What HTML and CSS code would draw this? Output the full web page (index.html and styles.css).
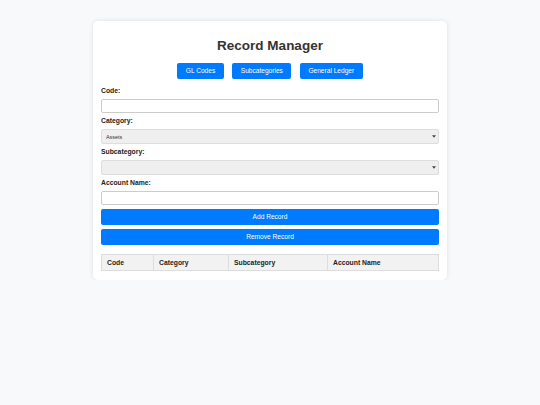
FILE: index.html
```html
<!DOCTYPE html>

<html lang="en">

<head>

    <meta charset="UTF-8">
    <meta name="viewport" content="width=device-width, initial-scale=1.0">

    <title>Record Manager</title>

    <link rel="stylesheet" href="styles.css">

</head>

<body>

    <div class="container">

        <h2>Record Manager</h2>

        <div class="nav">
            <button type="button">GL Codes</button>
            <button type="button">Subcategories</button>
            <button type="button">General Ledger</button>
        </div>

        <form id="recordForm">

            <label for="code">Code:</label>
            <input type="text" id="code" name="code">

            <label for="category">Category:</label>
            <div class="select-wrap">
                <select id="category" name="category">
                    <option value="assets" selected>Assets</option>
                    <option value="liabilities">Liabilities</option>
                    <option value="equity">Equity</option>
                </select>
                <svg class="arrow" width="4" height="3" viewBox="0 0 4 3"><path d="M0 0.3H4L2 2.7Z" fill="#444"/></svg>
            </div>

            <label for="subcategory">Subcategory:</label>
            <div class="select-wrap">
                <select id="subcategory" name="subcategory"></select>
                <svg class="arrow" width="4" height="3" viewBox="0 0 4 3"><path d="M0 0.3H4L2 2.7Z" fill="#444"/></svg>
            </div>

            <label for="accountName">Account Name:</label>
            <input type="text" id="accountName" name="accountName">

            <button type="button" class="wide">Add Record</button>
            <button type="button" class="wide">Remove Record</button>
        </form>

        <table>
            <thead>
                <tr>
                    <th class="col-code">Code</th>
                    <th class="col-cat">Category</th>
                    <th class="col-sub">Subcategory</th>
                    <th>Account Name</th>
                </tr>
            </thead>
            <tbody id="records"></tbody>
        </table>
    </div>

</body>

</html>
```

FILE: styles.css
```css
body {
    margin: 0;
    background-color: #f8f9fa;
    font-family: "Liberation Sans", Arial, sans-serif;
    color: #333;
}

.container {
    width: 354px;
    box-sizing: border-box;
    margin: 21px auto 0;
    padding: 17px 8px 9px;
    background-color: #fff;
    border-radius: 5px;
    box-shadow: 0 0 5px rgba(0, 0, 0, 0.1);
}

h2 {
    text-align: center;
    font-size: 13.5px;
    line-height: 16px;
    margin: 0 0 9px;
    color: #333;
}

.nav {
    display: flex;
    justify-content: center;
    gap: 8.5px;
    margin-bottom: 8px;
}

button {
    height: 16px;
    padding: 0 8.5px;
    background-color: #007bff;
    color: white;
    border: none;
    border-radius: 2px;
    font-family: inherit;
    font-size: 6.6px;
    line-height: 16px;
    cursor: pointer;
}

button:hover {
    opacity: 0.9;
}

form {
    display: flex;
    flex-direction: column;
}

label {
    font-size: 6.8px;
    line-height: 8px;
    font-weight: bold;
    color: #222;
    margin-bottom: 4px;
}

input[type="text"] {
    height: 14px;
    box-sizing: border-box;
    margin: 0 0 4px;
    padding: 0 4px;
    border: 1px solid #ccc;
    border-radius: 2px;
    font-size: 6.6px;
}

.select-wrap {
    position: relative;
    margin-bottom: 4px;
}

select {
    display: block;
    width: 100%;
    height: 15px;
    box-sizing: border-box;
    margin: 0;
    padding: 0 4px;
    appearance: none;
    -webkit-appearance: none;
    border: 1px solid #ddd;
    border-radius: 2px;
    background-color: #efefef;
    font-family: inherit;
    font-size: 5.4px;
    color: #333;
}

.arrow {
    position: absolute;
    right: 3px;
    top: 6px;
    pointer-events: none;
}

.wide {
    width: 100%;
    margin-bottom: 4px;
}

.wide:last-child {
    margin-bottom: 0;
}

table {
    width: 100%;
    margin-top: 9px;
    border-collapse: collapse;
    table-layout: fixed;
}

th {
    height: 15px;
    padding: 0 5px;
    background-color: #f2f2f2;
    border: 1px solid #ddd;
    text-align: left;
    font-size: 6.8px;
    color: #222;
}

.col-code {
    width: 41px;
}

.col-cat {
    width: 64px;
}

.col-sub {
    width: 88px;
}
```
